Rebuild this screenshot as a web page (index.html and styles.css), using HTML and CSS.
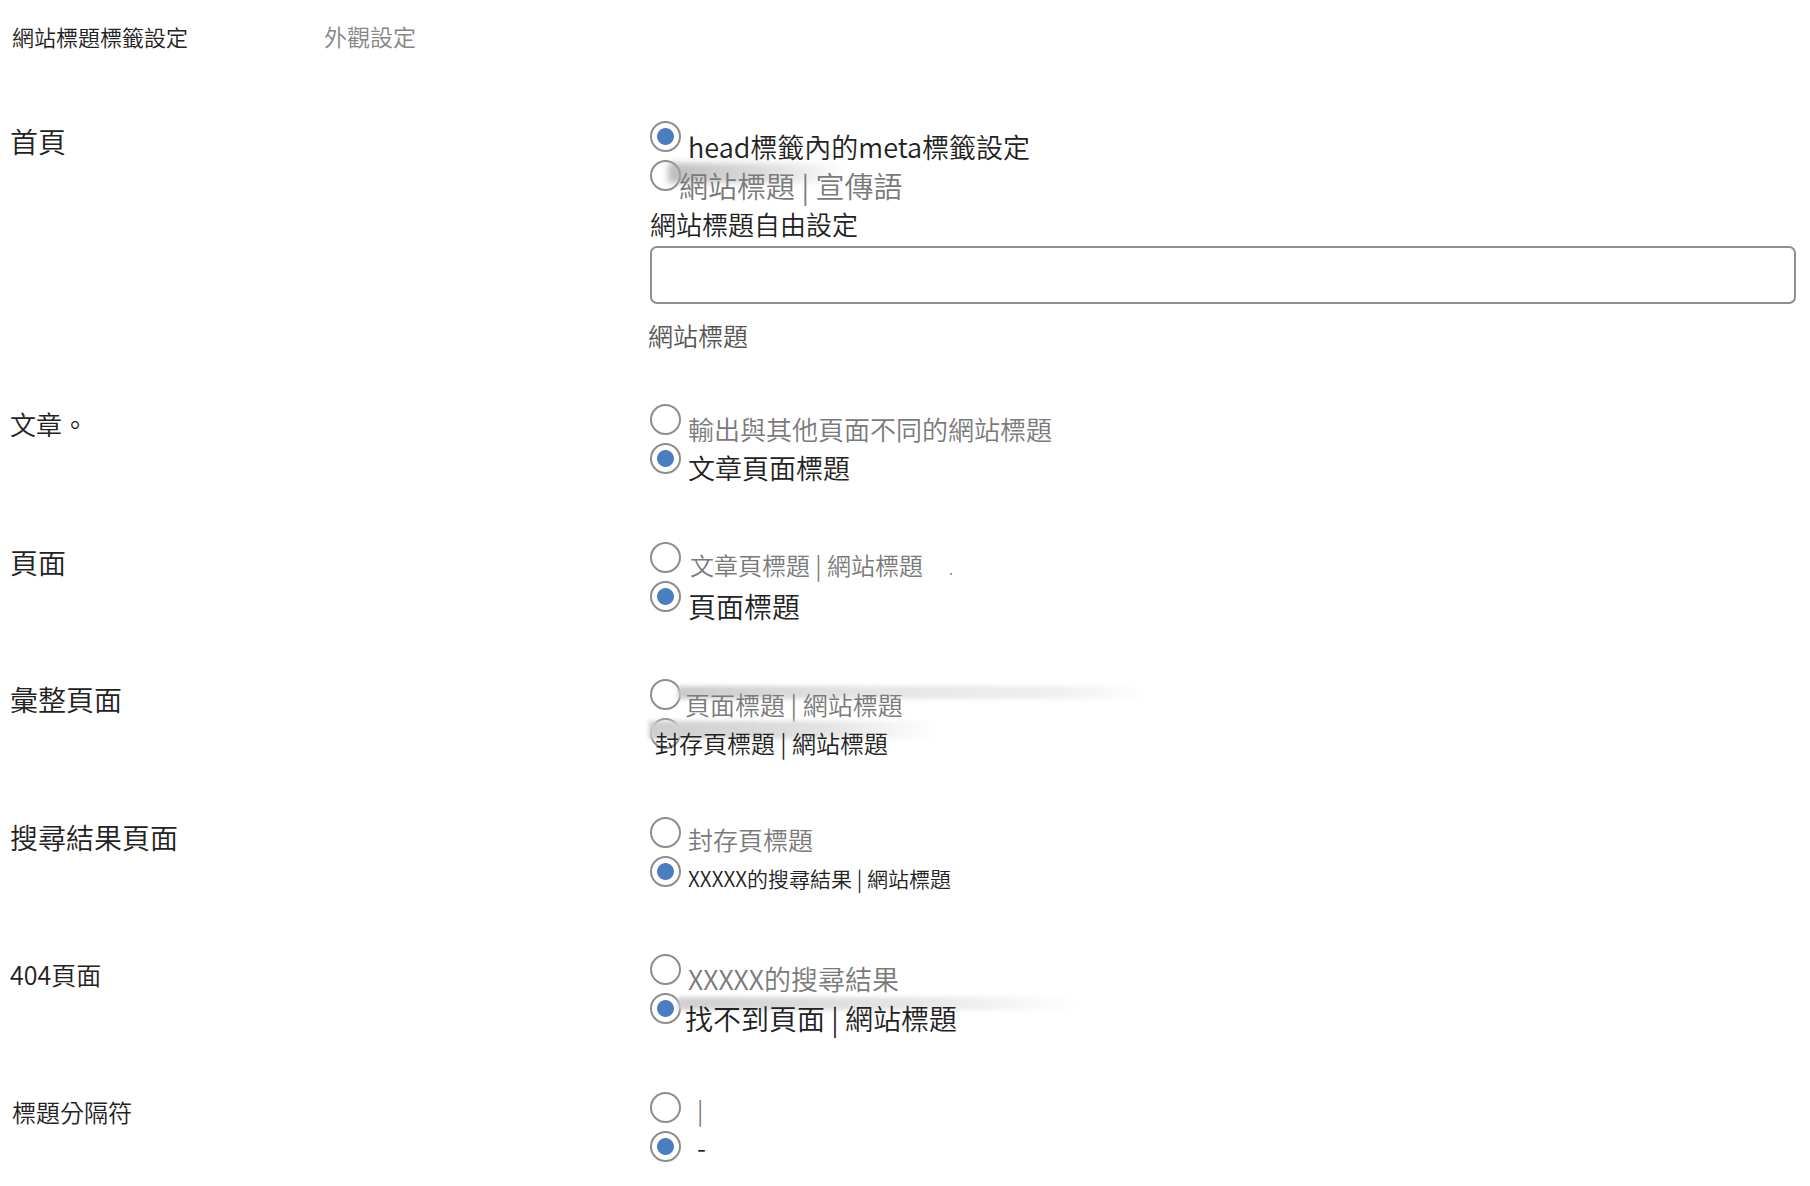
FILE: index.html
```html
<!DOCTYPE html>
<html lang="zh-Hant">
<head>
<meta charset="utf-8">
<title>網站標題標籤設定</title>
<link rel="stylesheet" href="styles.css">
</head>
<body>
<div class="page">
  <nav class="tabs">
    <span class="tab tab-active">網站標題標籤設定</span>
    <span class="tab">外觀設定</span>
  </nav>
  <form class="settings">
    <section class="row row-home">
      <div class="label fs28">首頁</div>
      <div class="opts">
        <label class="opt"><input type="radio" class="radio" name="home" checked><span class="txt dark fs27 up1">head標籤內的meta標籤設定</span></label>
        <label class="opt"><input type="radio" class="radio" name="home"><span class="txt gray fs29 streak streak-a shift-l9">網站標題 | 宣傳語</span></label>
        <div class="sublabel">網站標題自由設定</div>
        <input type="text" class="text-input">
        <div class="hint">網站標題</div>
      </div>
    </section>

    <section class="row">
      <div class="label fs26">文章。</div>
      <div class="opts">
        <label class="opt"><input type="radio" class="radio" name="post"><span class="txt gray fs26">輸出與其他頁面不同的網站標題</span></label>
        <label class="opt"><input type="radio" class="radio" name="post" checked><span class="txt dark fs27">文章頁面標題</span></label>
      </div>
    </section>

    <section class="row">
      <div class="label fs28">頁面</div>
      <div class="opts">
        <label class="opt"><input type="radio" class="radio" name="page"><span class="txt gray fs24 shift-r2 up-1">文章頁標題 | 網站標題</span><span class="speck"></span></label>
        <label class="opt"><input type="radio" class="radio" name="page" checked><span class="txt dark fs28">頁面標題</span></label>
      </div>
    </section>

    <section class="row">
      <div class="label fs28">彙整頁面</div>
      <div class="opts">
        <label class="opt"><input type="radio" class="radio" name="archive"><span class="txt gray fs25 streak streak-b shift-l3">頁面標題 | 網站標題</span></label>
        <label class="opt"><input type="radio" class="radio" name="archive"><span class="txt dark fs24 streak streak-c shift-l33">封存頁標題 | 網站標題</span></label>
      </div>
    </section>

    <section class="row">
      <div class="label fs28">搜尋結果頁面</div>
      <div class="opts">
        <label class="opt"><input type="radio" class="radio" name="search"><span class="txt gray fs25 up-2">封存頁標題</span></label>
        <label class="opt"><input type="radio" class="radio" name="search" checked><span class="txt dark fs21 up-2">XXXXX的搜尋結果 | 網站標題</span></label>
      </div>
    </section>

    <section class="row">
      <div class="label fs25">404頁面</div>
      <div class="opts">
        <label class="opt"><input type="radio" class="radio" name="notfound"><span class="txt gray fs27">XXXXX的搜尋結果</span></label>
        <label class="opt"><input type="radio" class="radio" name="notfound" checked><span class="txt dark fs28 streak streak-d shift-l3">找不到頁面 | 網站標題</span></label>
      </div>
    </section>

    <section class="row row-last">
      <div class="label fs24 label-sep">標題分隔符</div>
      <div class="opts">
        <label class="opt"><input type="radio" class="radio" name="sep"><span class="txt gray fs24 sep sep-bar">|</span></label>
        <label class="opt"><input type="radio" class="radio" name="sep" checked><span class="txt dark fs24 sep sep-dash">-</span></label>
      </div>
    </section>
  </form>
</div>
</body>
</html>
```

FILE: styles.css
```css
* {
  box-sizing: border-box;
}

html, body {
  margin: 0;
  background: #ffffff;
}

body {
  font-family: "Noto Sans CJK TC", "Noto Sans", sans-serif;
  font-weight: 350;
  color: #222222;
}

.page {
  padding: 0 10px;
}

/* tabs */
.tabs {
  display: flex;
  align-items: flex-start;
  height: 119px;
  padding-top: 21px;
}

.tab {
  line-height: 30px;
  font-size: 23px;
  color: #868686;
  white-space: nowrap;
}

.tab-active {
  width: 314px;
  padding-left: 2px;
  font-size: 22px;
  color: #222222;
}

/* rows */
.row {
  display: grid;
  grid-template-columns: 640px 1fr;
  margin-bottom: 59.5px;
}

.row-home {
  margin-bottom: 50px;
}

.row-last {
  margin-bottom: 0;
}

.label {
  padding-top: 2px;
  line-height: 40px;
  color: #222222;
  white-space: nowrap;
}

.label-sep {
  padding-left: 2px;
}

.opts {
  display: flex;
  flex-direction: column;
  min-width: 0;
}

.opt {
  display: flex;
  align-items: flex-start;
  height: 39px;
}

.radio {
  -webkit-appearance: none;
  appearance: none;
  flex: none;
  width: 31px;
  height: 31px;
  margin: 2px 0 0 0;
  border: 2px solid #8d8d8d;
  border-radius: 50%;
  background: #ffffff;
  position: relative;
  z-index: 0;
}

.radio:checked {
  background: radial-gradient(circle, #4a7dc1 0, #4a7dc1 8px, #ffffff 8.8px);
}

.txt {
  margin-left: 7px;
  margin-top: 10px;
  line-height: 34px;
  white-space: nowrap;
  position: relative;
  z-index: 1;
}

.up1 {
  margin-top: 11px;
}

.up-1 {
  margin-top: 8px;
}

.up-2 {
  margin-top: 7px;
}

.dark { color: #222222; }
.gray { color: #7a7a7a; }

.fs21 { font-size: 21px; }
.fs24 { font-size: 24px; }
.fs25 { font-size: 25px; }
.fs26 { font-size: 26px; }
.fs27 { font-size: 27px; }
.fs28 { font-size: 28px; }
.fs29 { font-size: 29px; }

.shift-l9 { margin-left: -2px; }
.shift-l3 { margin-left: 4px; }
.shift-l33 { margin-left: -26px; }
.shift-r2 { margin-left: 9px; }

.sep {
  margin-left: 16px;
}

.sep-bar {
  margin-top: 3px;
}

.sep-dash {
  margin-top: 1px;
  font-size: 26px;
}

/* blurred smear artefacts behind some labels */
.streak::before {
  content: "";
  position: absolute;
  z-index: -1;
  filter: blur(2px);
  pointer-events: none;
}

.streak-a::before {
  left: -11px;
  top: -5px;
  width: 180px;
  height: 20px;
  background: linear-gradient(to right, rgba(160,160,160,0.7), rgba(195,195,195,0.55) 55%, rgba(255,255,255,0));
  filter: blur(3px);
}

.streak-b::before {
  left: -7px;
  top: -1px;
  width: 468px;
  height: 13px;
  background: linear-gradient(to right, rgba(200,200,200,0.95), rgba(225,225,225,0.9) 40%, rgba(235,235,235,0.8) 80%, rgba(255,255,255,0));
}

.streak-c::before {
  left: -6px;
  top: -5px;
  width: 288px;
  height: 18px;
  background: linear-gradient(to right, rgba(205,205,205,0.98), rgba(222,222,222,0.95) 55%, rgba(255,255,255,0));
}

.streak-d::before {
  left: -7px;
  top: -4px;
  width: 400px;
  height: 13px;
  background: linear-gradient(to right, rgba(205,205,205,0.95), rgba(228,228,228,0.9) 60%, rgba(255,255,255,0));
}

.speck {
  width: 2px;
  height: 2px;
  margin: 33px 0 0 27px;
  background: #9a9a9a;
  flex: none;
}

/* free-text title */
.sublabel {
  margin-top: 10px;
  line-height: 34px;
  font-size: 26px;
  color: #222222;
}

.text-input {
  display: block;
  width: calc(100% - 4px);
  height: 58px;
  margin-top: 5px;
  border: 2px solid #8e8e93;
  border-radius: 7px;
  background: #ffffff;
  font: inherit;
}

.hint {
  margin-top: 14px;
  margin-left: -2px;
  line-height: 34px;
  font-size: 25px;
  color: #555555;
}
```
